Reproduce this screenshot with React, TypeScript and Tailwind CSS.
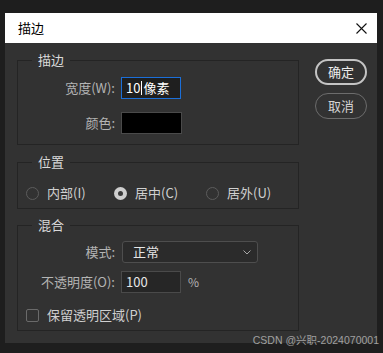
import type { ReactNode } from 'react'

const font = "font-['Noto_Sans_CJK_SC','Noto_Sans',sans-serif]"

function Group({ title, className, children }: { title: string; className: string; children: ReactNode }) {
  return (
    <div className={`relative border border-[#242424] ${className}`}>
      <span className="absolute left-[14px] top-[-10px] bg-[#323232] px-[6px] text-[13px] leading-[18px] text-[#dadada]">
        {title}
      </span>
      {children}
    </div>
  )
}

function Label({ children }: { children: ReactNode }) {
  return <span className="w-[103px] shrink-0 pr-[6px] text-right text-[13px] leading-[18px] text-[#b4b4b4]">{children}</span>
}

function Radio({ label, checked, width }: { label: string; checked?: boolean; width: string }) {
  return (
    <div className={`flex items-center gap-[8px] ${width}`}>
      {checked ? (
        <span className="flex h-[13px] w-[13px] items-center justify-center rounded-full bg-[#cfcfcf]">
          <span className="h-[5px] w-[5px] rounded-full bg-[#3a3a3a]" />
        </span>
      ) : (
        <span className="h-[13px] w-[13px] rounded-full border border-[#5c5c5c]" />
      )}
      <span className="text-[13px] leading-[18px] text-[#d0d0d0]">{label}</span>
    </div>
  )
}

export default function App() {
  return (
    <div className={`relative h-[353px] w-[383px] overflow-hidden bg-[#1e1e1e] pl-[5px] pt-[13px] ${font}`}>
      <div className="flex h-[330px] w-[372px] flex-col">
        {/* title bar */}
        <div className="flex h-[30px] items-center justify-between bg-white pl-[13px] pr-[10px]">
          <span className="text-[13px] text-black">描边</span>
          <svg width="11" height="11" viewBox="0 0 11 11" className="mt-[1px]">
            <path d="M0.5 0.5 L10.5 10.5 M10.5 0.5 L0.5 10.5" stroke="#111" strokeWidth="1.1" fill="none" />
          </svg>
        </div>

        {/* body */}
        <div className="flex flex-1 bg-[#323232] pl-[12px] pt-[17px]">
          <div className="flex w-[282px] flex-col">
            <Group title="描边" className="h-[85px] pt-[16px]">
              <div className="flex items-center">
                <Label>宽度(W):</Label>
                <div className="flex h-[22px] w-[60px] items-center border border-[#1b6fd9] bg-[#1f1f1f] pl-[4px] text-[13px] text-white">
                  10<span className="mx-[1px] h-[14px] w-px bg-white" />像素
                </div>
              </div>
              <div className="mt-[13px] flex items-center">
                <Label>颜色:</Label>
                <div className="h-[22px] w-[61px] border border-[#4a4a4a] bg-black" />
              </div>
            </Group>

            <Group title="位置" className="mt-[17px] h-[47px] pl-[8px] pt-[21px]">
              <div className="flex items-center">
                <Radio label="内部(I)" width="w-[88px]" />
                <Radio label="居中(C)" checked width="w-[92px]" />
                <Radio label="居外(U)" width="w-[80px]" />
              </div>
            </Group>

            <Group title="混合" className="mt-[16px] h-[106px] pt-[15px]">
              <div className="flex items-center">
                <Label>模式:</Label>
                <div className="ml-[1px] flex h-[22px] w-[136px] items-center justify-between rounded-[3px] border border-[#4e4e4e] bg-[#2b2b2b] pl-[10px] pr-[6px]">
                  <span className="text-[13px] text-[#e6e6e6]">正常</span>
                  <svg width="8" height="5" viewBox="0 0 8 5">
                    <path d="M0.5 0.5 L4 4 L7.5 0.5" stroke="#a8a8a8" strokeWidth="1" fill="none" />
                  </svg>
                </div>
              </div>
              <div className="mt-[8px] flex items-center">
                <Label>不透明度(O):</Label>
                <div className="flex h-[22px] w-[60px] items-center border border-[#4a4a4a] bg-[#262626] pl-[4px] text-[13px] text-[#e6e6e6]">
                  100
                </div>
                <span className="ml-[7px] text-[12px] text-[#b4b4b4]">%</span>
              </div>
              <div className="mt-[13px] flex items-center pl-[8px]">
                <span className="h-[13px] w-[13px] rounded-[2px] border border-[#6a6a6a]" />
                <span className="ml-[8px] text-[13px] leading-[18px] text-[#d0d0d0]">保留透明区域(P)</span>
              </div>
            </Group>
          </div>

          <div className="ml-[16px] flex flex-col gap-[8px]">
            <button className="-mt-[1px] h-[26px] w-[52px] rounded-full border-2 border-[#c4c4c4] text-[13px] text-[#ececec]">
              确定
            </button>
            <button className="h-[26px] w-[52px] rounded-full border border-[#6c6c6c] text-[13px] text-[#d4d4d4]">
              取消
            </button>
          </div>
        </div>
      </div>

      <span className="absolute bottom-[6px] right-[4px] text-[10.5px] leading-[14px] text-[#a0a0a0] font-['Liberation_Sans','Noto_Sans_CJK_SC',sans-serif]">
        CSDN @兴职-2024070001
      </span>
    </div>
  )
}
